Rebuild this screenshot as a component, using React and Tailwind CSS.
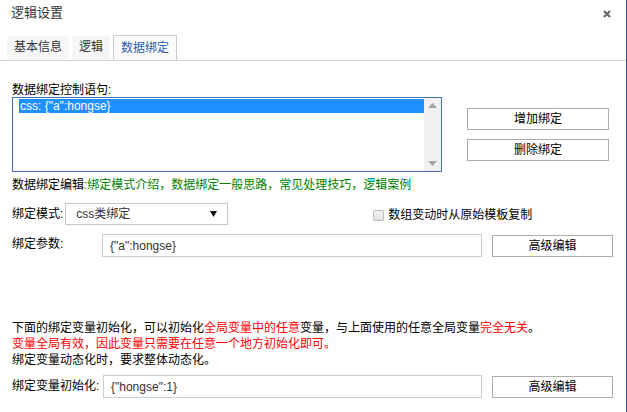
import React from "react";

const font = {
  fontFamily: '"Liberation Sans", "Noto Sans CJK SC", sans-serif',
};

function Tab({ label, active = false }) {
  if (active) {
    return (
      <div className="h-[25px] border border-b-0 border-[#cccccc] bg-[#fbfbfb] px-[7px] pt-[5px] text-[12px] leading-[14px] text-[#2a5ca8]">
        {label}
      </div>
    );
  }
  return (
    <div className="mt-[1px] h-[24px] bg-[#f6f6f6] px-[7px] pt-[4px] text-[12px] leading-[14px] text-[#333333]">
      {label}
    </div>
  );
}

function Button({ children, className = "" }) {
  return (
    <div
      className={`flex items-center justify-center border border-[#adadad] bg-white text-[12px] text-black ${className}`}
    >
      {children}
    </div>
  );
}

export default function App() {
  return (
    <div
      className="relative h-[412px] w-[627px] overflow-hidden border-r border-[#2b4f8a] bg-white text-black"
      style={font}
    >
      {/* header */}
      <div className="flex h-[35px] items-start justify-between pl-[11px] pr-[15px] pt-[5px]">
        <div className="text-[13px] leading-[16px] text-[#333333]">逻辑设置</div>
        <svg width="8" height="8" viewBox="0 0 8 8" className="mt-[5px]">
          <path d="M1 1 L7 7 M7 1 L1 7" stroke="#666666" strokeWidth="2" />
        </svg>
      </div>

      {/* tabs */}
      <div className="flex h-[26px] items-start gap-[3px] border-b border-[#d3d3d3] pl-[7px]">
        <Tab label="基本信息" />
        <Tab label="逻辑" />
        <Tab label="数据绑定" active />
      </div>

      <div className="px-[12px]">
        {/* statement list + buttons */}
        <div className="mt-[22px] flex">
          <div className="w-[430px]">
            <div className="text-[12px] leading-[14px]">数据绑定控制语句:</div>
            <div className="flex h-[75px] border border-[#4070b8]">
              <div className="flex-1 pl-[6px] pt-[1px]">
                <div className="h-[14px] bg-[#1e90ff] pl-[1px] text-[12px] leading-[14px] text-white">
                  css: {"{"}"a":hongse{"}"}
                </div>
              </div>
              <div className="flex w-[17px] flex-col items-center justify-between bg-[#f0f0f0] py-[5px]">
                <svg width="9" height="5" viewBox="0 0 9 5">
                  <path d="M0 5 L4.5 0 L9 5 Z" fill="#a3a3a3" />
                </svg>
                <svg width="9" height="5" viewBox="0 0 9 5">
                  <path d="M0 0 L4.5 5 L9 0 Z" fill="#a3a3a3" />
                </svg>
              </div>
            </div>
          </div>
          <div className="ml-[25px] flex flex-col gap-[9px] pt-[25px]">
            <Button className="h-[22px] w-[142px]">增加绑定</Button>
            <Button className="h-[22px] w-[142px]">删除绑定</Button>
          </div>
        </div>

        {/* help links */}
        <div className="mt-[6px] text-[12px] leading-[14px]">
          数据绑定编辑
          <span className="text-[#008000]">:绑定模式介绍，数据绑定一般思路，常见处理技巧，逻辑案例</span>
        </div>

        {/* mode row */}
        <div className="mt-[11px] flex items-start">
          <div className="pt-[4px] text-[12px] leading-[14px]">绑定模式:</div>
          <div className="ml-[2px] flex h-[22px] w-[163px] items-center justify-between border border-[#c8c8c8] bg-white pl-[10px] pr-[10px] text-[12px] text-[#333333]">
            <span>css类绑定</span>
            <svg width="7" height="6" viewBox="0 0 7 6">
              <path d="M0 0 L7 0 L3.5 6 Z" fill="#111111" />
            </svg>
          </div>
          <div className="ml-[145px] flex items-center pt-[5px]">
            <div className="h-[11px] w-[11px] rounded-[2px] border border-[#bcbcbc] bg-gradient-to-b from-[#f4f4f4] to-[#e2e2e2]" />
            <span className="ml-[4px] text-[12px] leading-[14px]">数组变动时从原始模板复制</span>
          </div>
        </div>

        {/* params row */}
        <div className="mt-[9px] flex items-start">
          <div className="w-[90px] pt-[3px] text-[12px] leading-[14px]">绑定参数:</div>
          <div className="flex h-[23px] w-[380px] items-center border border-[#c6ced6] pl-[7px] text-[12px] text-[#333333]">
            {"{"}"a":hongse{"}"}
          </div>
          <Button className="ml-[10px] mt-[1px] h-[22px] w-[121px]">高级编辑</Button>
        </div>

        {/* notes */}
        <div className="mt-[63px] text-[12px] leading-[16px]">
          <div>
            下面的绑定变量初始化，可以初始化
            <span className="text-[#ff0000]">全局变量中的任意</span>
            变量，与上面使用的任意全局变量
            <span className="text-[#ff0000]">完全无关</span>。
          </div>
          <div className="text-[#ff0000]">变量全局有效，因此变量只需要在任意一个地方初始化即可。</div>
          <div>绑定变量动态化时，要求整体动态化。</div>
        </div>

        {/* init row */}
        <div className="mt-[7px] flex items-start">
          <div className="w-[91px] pt-[4px] text-[12px] leading-[14px]">绑定变量初始化:</div>
          <div className="flex h-[23px] w-[379px] items-center border border-[#c6ced6] pl-[7px] text-[12px] text-[#333333]">
            {"{"}"hongse":1{"}"}
          </div>
          <Button className="ml-[10px] mt-[1px] h-[22px] w-[121px]">高级编辑</Button>
        </div>
      </div>
    </div>
  );
}
